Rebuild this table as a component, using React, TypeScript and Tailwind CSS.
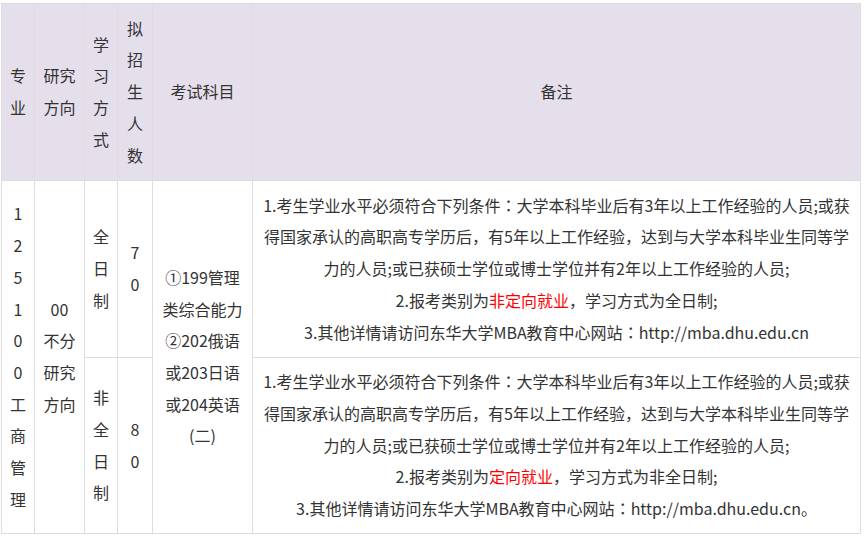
import React from "react";

const cell =
  "border-r border-b border-[#dddddd] flex flex-col items-center justify-center text-center leading-[31.7px]";
const head = cell + " bg-[#e4dfeb]";

function Colon() {
  return <span className="font-['Noto_Sans_CJK_TC',sans-serif]">：</span>;
}

function Lines({ items }: { items: React.ReactNode[] }) {
  return (
    <>
      {items.map((t, i) => (
        <div key={i} className="whitespace-nowrap">
          {t}
        </div>
      ))}
    </>
  );
}

function Note({ red, mode, end }: { red: string; mode: string; end: string }) {
  return (
    <Lines
      items={[
        <>
          1.考生学业水平必须符合下列条件<Colon />大学本科毕业后有3年以上工作经验的人员;或获
        </>,
        "得国家承认的高职高专学历后，有5年以上工作经验，达到与大学本科毕业生同等学",
        "力的人员;或已获硕士学位或博士学位并有2年以上工作经验的人员;",
        <>
          2.报考类别为<span className="text-[#ff0000]">{red}</span>，学习方式为{mode};
        </>,
        <>
          3.其他详情请访问东华大学MBA教育中心网站<Colon />http://mba.dhu.edu.cn{end}
        </>,
      ]}
    />
  );
}

export default function App() {
  return (
    <div className="w-[865px] h-[537px] bg-white pt-[3px] pl-[1px] font-['Microsoft_YaHei','Noto_Sans_CJK_SC',sans-serif] text-[16px] text-[#333333]">
      <div className="grid w-[860px] grid-cols-[33px_50px_33px_35px_100px_608px] grid-rows-[177px_177px_176px] border-l border-t border-[#dddddd]">
        <div className={head}>
          <Lines items={["专", "业"]} />
        </div>
        <div className={head}>
          <Lines items={["研究", "方向"]} />
        </div>
        <div className={head}>
          <Lines items={["学", "习", "方", "式"]} />
        </div>
        <div className={head}>
          <Lines items={["拟", "招", "生", "人", "数"]} />
        </div>
        <div className={head}>
          <Lines items={["考试科目"]} />
        </div>
        <div className={head}>
          <Lines items={["备注"]} />
        </div>

        <div className={cell + " row-span-2"}>
          <Lines items={["1", "2", "5", "1", "0", "0", "工", "商", "管", "理"]} />
        </div>
        <div className={cell + " row-span-2"}>
          <Lines items={["00", "不分", "研究", "方向"]} />
        </div>
        <div className={cell}>
          <Lines items={["全", "日", "制"]} />
        </div>
        <div className={cell}>
          <Lines items={["7", "0"]} />
        </div>
        <div className={cell + " row-span-2"}>
          <Lines
            items={["①199管理", "类综合能力", "②202俄语", "或203日语", "或204英语", "(二)"]}
          />
        </div>
        <div className={cell}>
          <Note red="非定向就业" mode="全日制" end="" />
        </div>

        <div className={cell}>
          <Lines items={["非", "全", "日", "制"]} />
        </div>
        <div className={cell}>
          <Lines items={["8", "0"]} />
        </div>
        <div className={cell}>
          <Note red="定向就业" mode="非全日制" end="。" />
        </div>
      </div>
    </div>
  );
}
